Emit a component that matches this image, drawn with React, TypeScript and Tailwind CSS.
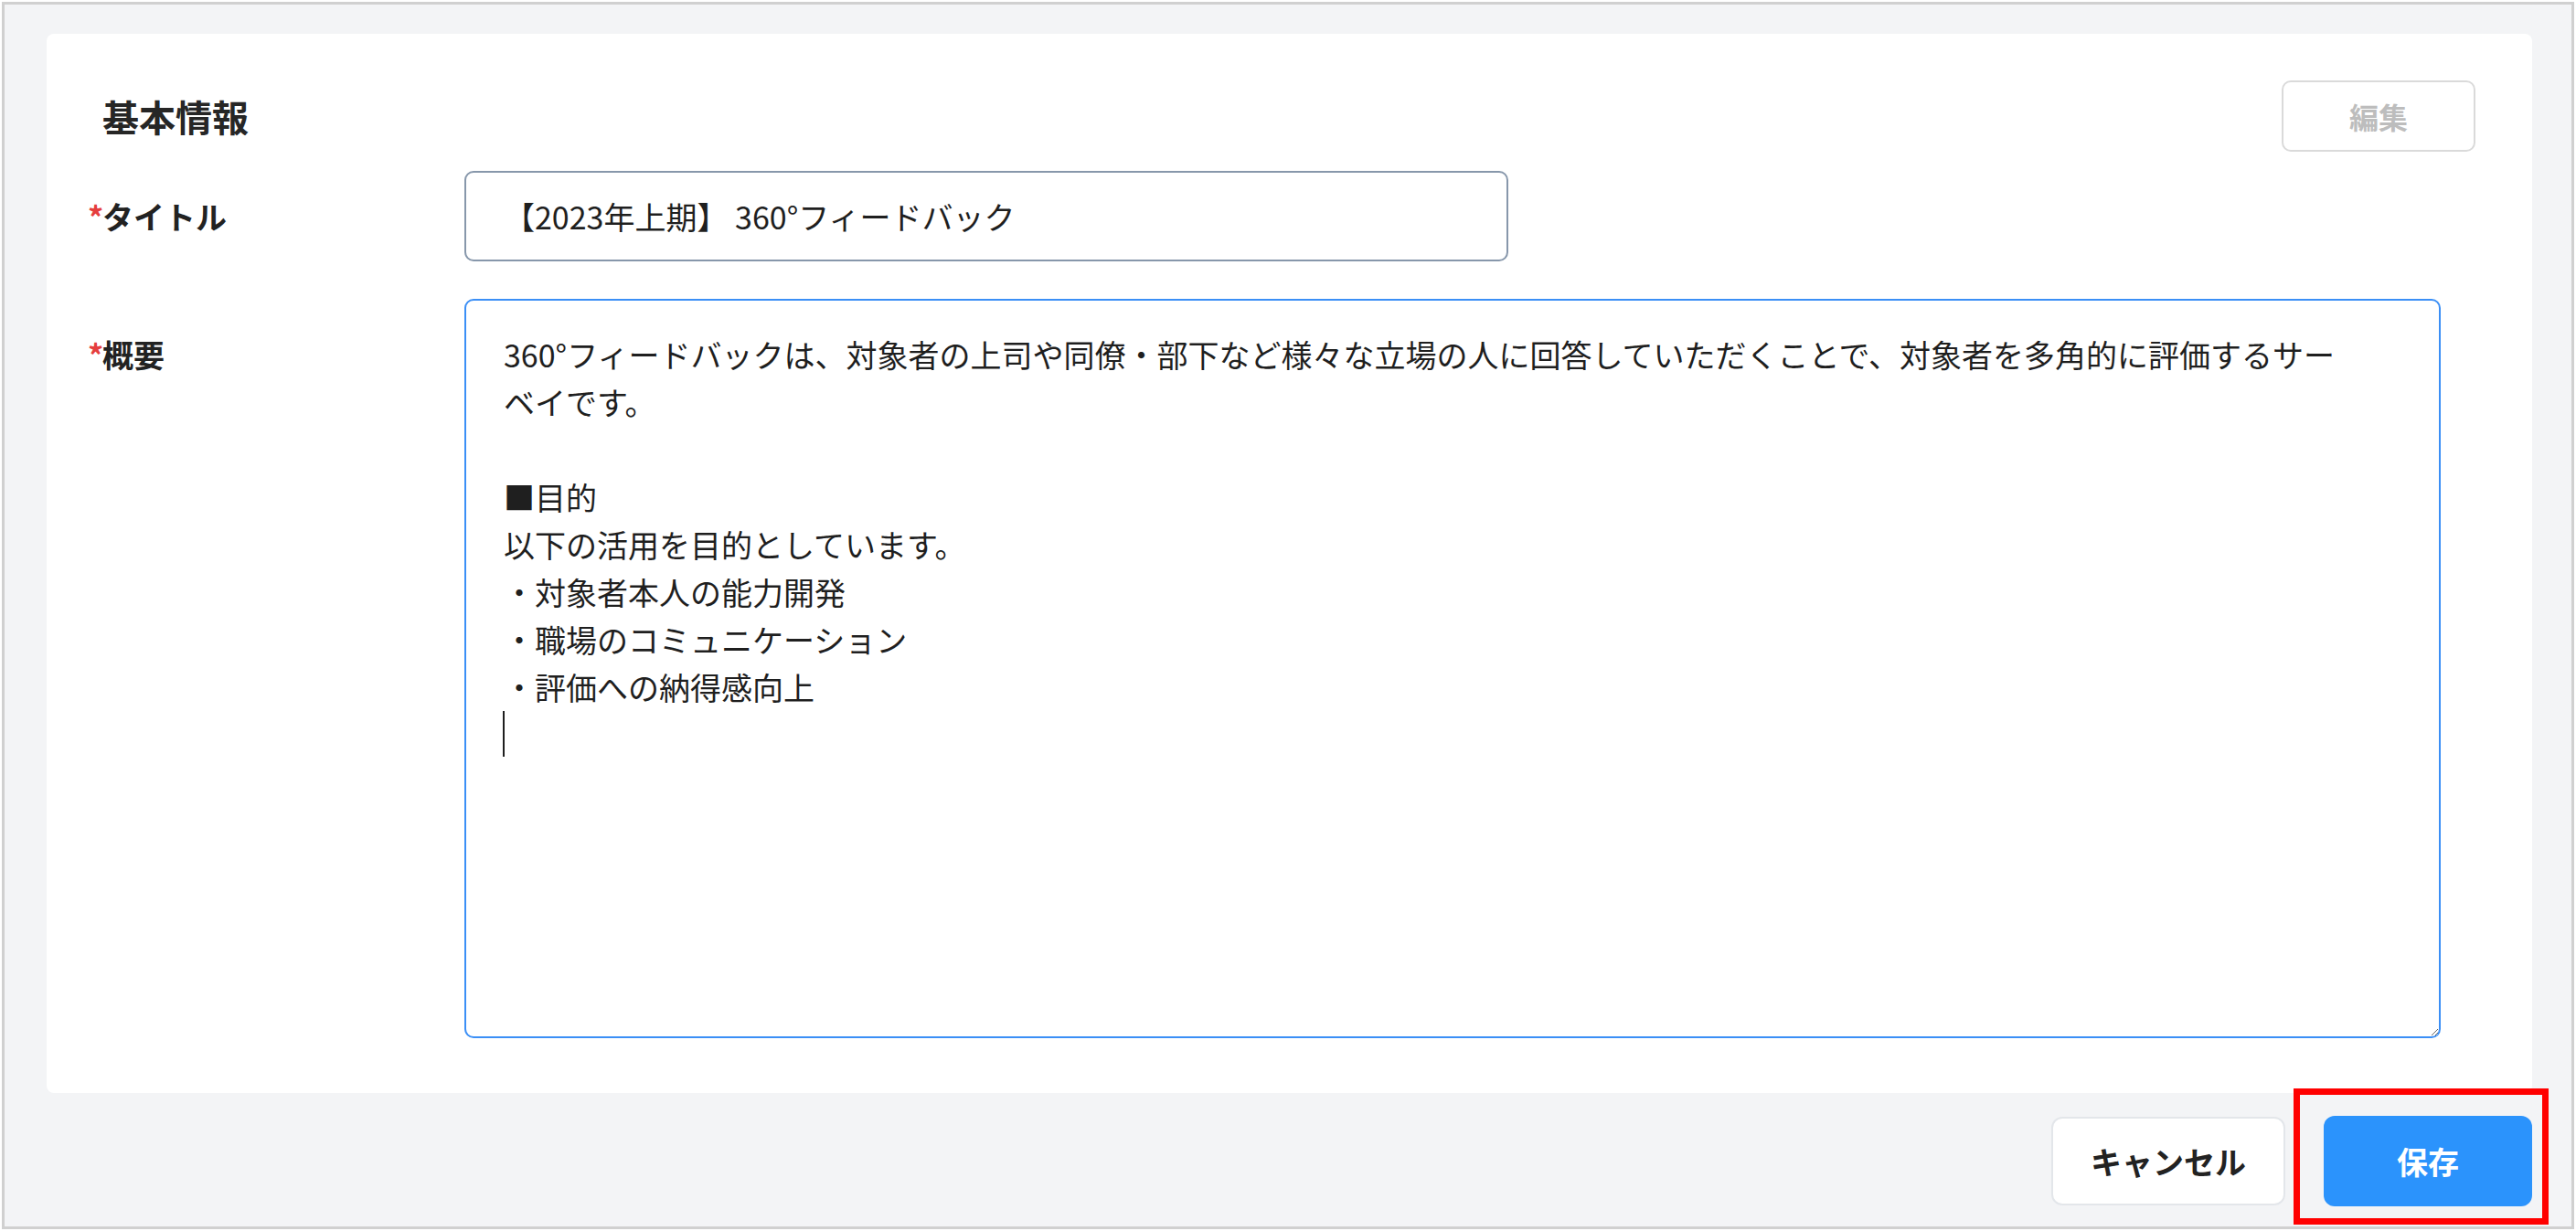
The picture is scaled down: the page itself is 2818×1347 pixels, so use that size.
const summary =
  "360°フィードバックは、対象者の上司や同僚・部下など様々な立場の人に回答していただくことで、対象者を多角的に評価するサー\nベイです。\n\n■目的\n以下の活用を目的としています。\n・対象者本人の能力開発\n・職場のコミュニケーション\n・評価への納得感向上\n";

function FieldLabel({ text }: { text: string }) {
  return (
    <div className="flex w-[412px] shrink-0 text-[34px] font-bold leading-[52px] text-[#222]">
      <span className="w-[16px] text-[#e53e3e]">*</span>
      <span>{text}</span>
    </div>
  );
}

export default function App() {
  return (
    <div
      className="h-[1347px] w-[2818px] bg-white p-[2px] text-[#1f1f1f]"
      style={{ fontFamily: '"Noto Sans CJK JP", "Noto Sans", sans-serif' }}
    >
      <div className="h-full border-[3px] border-[#d0d0d0] bg-[#f3f4f6] pl-[46px] pr-[43px] pt-[32px]">
        {/* card */}
        <div className="rounded-[8px] bg-white pb-[60px] pl-[45px] pr-[62px] pt-[51px]">
          <div className="flex h-[78px] items-center justify-between">
            <h2 className="pl-[16px] text-[40px] font-bold text-[#262626]">基本情報</h2>
            <button className="h-[78px] w-[212px] rounded-[10px] border-2 border-[#dadada] bg-white text-[32px] font-bold text-[#bdbdbd]">
              編集
            </button>
          </div>

          <div className="mt-[21px] flex items-center">
            <FieldLabel text="タイトル" />
            <input
              className="h-[99px] w-[1142px] rounded-[10px] border-2 border-[#8797ab] bg-white px-[41px] text-[34px] text-[#1f1f1f] outline-none"
              defaultValue="【2023年上期】 360°フィードバック"
            />
          </div>

          <div className="mt-[41px] flex items-start">
            <div className="pt-[35px]">
              <FieldLabel text="概要" />
            </div>
            <div className="relative">
              <textarea
                className="block h-[809px] w-[2162px] rounded-[10px] border-2 border-[#3b8ff6] bg-white px-[41px] pt-[33px] text-[34px] leading-[52px] text-[#1f1f1f] outline-none"
                defaultValue={summary}
              />
              <span className="absolute left-[42px] top-[451px] h-[50px] w-[2px] bg-[#1f1f1f]" />
            </div>
          </div>
        </div>

        {/* footer */}
        <div className="mt-[25px] flex items-center justify-end gap-[42px]">
          <button className="h-[97px] w-[256px] rounded-[12px] border-2 border-[#e3e6ea] bg-white text-[34px] font-bold text-[#222]">
            キャンセル
          </button>
          <div className="relative">
            <button className="h-[99px] w-[228px] rounded-[12px] bg-[#2b93fc] text-[34px] font-bold text-white">
              保存
            </button>
            <span className="pointer-events-none absolute -bottom-[20px] -left-[33px] -right-[18px] -top-[30px] border-[7px] border-[#ff0000]" />
          </div>
        </div>
      </div>
    </div>
  );
}
